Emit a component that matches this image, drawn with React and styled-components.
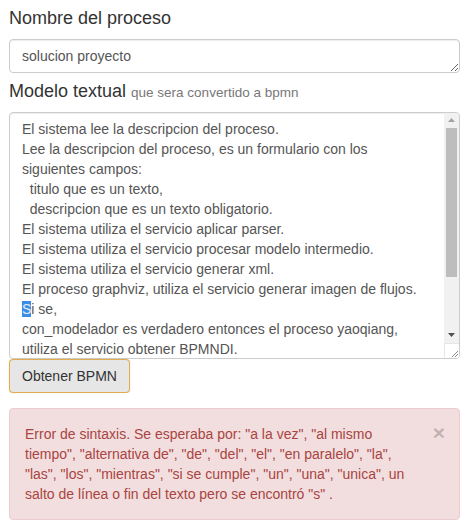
import React from 'react';
import styled, { createGlobalStyle } from 'styled-components';

const GlobalStyle = createGlobalStyle`
  html, body {
    margin: 0;
    padding: 0;
    background: #fff;
  }
  body {
    font-family: "Liberation Sans", Arial, sans-serif;
    font-size: 14px;
    line-height: 1.42857143;
    color: #333;
  }
  * {
    box-sizing: border-box;
  }
`;

const Page = styled.div`
  width: 451px;
  margin-left: 9px;
`;

const Heading = styled.h4`
  font-size: 18px;
  font-weight: 500;
  line-height: 1.1;
  margin: 9px 0 10px;
  color: #333;
`;

const Hint = styled.small`
  font-size: 75%;
  font-weight: 400;
  color: #777;
`;

const NameInput = styled.textarea`
  display: block;
  width: 100%;
  height: 34px;
  padding: 6px 12px;
  margin: 0;
  font-family: inherit;
  font-size: 14px;
  line-height: 1.42857143;
  color: #555;
  background: #fff;
  border: 1px solid #ccc;
  border-radius: 4px;
  box-shadow: inset 0 1px 1px rgba(0, 0, 0, 0.075);
  resize: vertical;
  overflow: hidden;
  outline: none;
`;

const ModelBox = styled.div`
  display: flex;
  width: 100%;
  height: 247px;
  background: #fff;
  border: 1px solid #ccc;
  border-radius: 4px;
  box-shadow: inset 0 1px 1px rgba(0, 0, 0, 0.075);
  overflow: hidden;
`;

const Lines = styled.div`
  flex: 1;
  min-width: 0;
  padding: 6px 12px;
  color: #555;
  white-space: pre-wrap;
  overflow: hidden;
`;

const Selected = styled.span`
  background: #3a8ee8;
  color: #e6ecf5;
`;

const Rail = styled.div`
  display: flex;
  flex-direction: column;
  width: 15px;
  flex-shrink: 0;
  background: #f1f1f1;
`;

const ArrowButton = styled.div`
  display: flex;
  align-items: center;
  justify-content: center;
  height: 15px;
  flex-shrink: 0;
`;

const Track = styled.div`
  flex: 1;
  padding: 0 2px;
`;

const Thumb = styled.div`
  height: 149px;
  background: #bdbdbd;
`;

const Corner = styled.div`
  display: flex;
  align-items: flex-end;
  justify-content: flex-end;
  height: 15px;
  flex-shrink: 0;
  background: #fff;
  border-left: 1px solid #e6e6e6;
  border-top: 1px solid #e6e6e6;
`;

const Button = styled.button`
  display: inline-block;
  margin: 0;
  padding: 6px 12px;
  font-family: inherit;
  font-size: 14px;
  line-height: 1.42857143;
  color: #333;
  background: #e6e6e6;
  border: 1px solid #e0ac52;
  border-radius: 4px;
  box-shadow: 0 0 1px 0 rgba(229, 151, 0, 0.6);
  cursor: pointer;
`;

const Alert = styled.div`
  position: relative;
  margin-top: 15px;
  padding: 15px 35px 15px 15px;
  color: #a94442;
  background: #f2dede;
  border: 1px solid #ebccd1;
  border-radius: 4px;
`;

const Close = styled.span`
  position: absolute;
  top: 13px;
  right: 14px;
  font-size: 21px;
  font-weight: 700;
  line-height: 1;
  color: #000;
  opacity: 0.2;
  text-shadow: 0 1px 0 #fff;
  cursor: pointer;
`;

const before = `El sistema lee la descripcion del proceso.
Lee la descripcion del proceso, es un formulario con los
siguientes campos:
  titulo que es un texto,
  descripcion que es un texto obligatorio.
El sistema utiliza el servicio aplicar parser.
El sistema utiliza el servicio procesar modelo intermedio.
El sistema utiliza el servicio generar xml.
El proceso graphviz, utiliza el servicio generar imagen de flujos.
`;

const after = `i se,
con_modelador es verdadero entonces el proceso yaoqiang,
utiliza el servicio obtener BPMNDI.
Si no,
el proceso yaoqiang, utiliza el servicio generar BPMN.
El sistema utiliza el servicio guardar BPMN.
El sistema muestra el BPMN.`;

export default function App() {
  return (
    <Page>
      <GlobalStyle />
      <Heading>Nombre del proceso</Heading>
      <NameInput rows={1} readOnly defaultValue="solucion proyecto" />
      <Heading>
        Modelo textual <Hint>que sera convertido a bpmn</Hint>
      </Heading>
      <ModelBox>
        <Lines>
          {before}
          <Selected>S</Selected>
          {after}
        </Lines>
        <Rail>
          <ArrowButton>
            <svg width="7" height="4" viewBox="0 0 7 4">
              <path d="M0 4 L3.5 0 L7 4 Z" fill="#a3a3a3" />
            </svg>
          </ArrowButton>
          <Track>
            <Thumb />
          </Track>
          <ArrowButton>
            <svg width="7" height="4" viewBox="0 0 7 4">
              <path d="M0 0 L7 0 L3.5 4 Z" fill="#505050" />
            </svg>
          </ArrowButton>
          <Corner>
            <svg width="8" height="8" viewBox="0 0 8 8">
              <path d="M1 7 L7 1 M4 7 L7 4" stroke="#8a8a8a" strokeWidth="1" />
            </svg>
          </Corner>
        </Rail>
      </ModelBox>
      <Button>Obtener BPMN</Button>
      <Alert>
        <Close>×</Close>
        Error de sintaxis. Se esperaba por: "a la vez", "al mismo tiempo", "alternativa de", "de", "del", "el", "en paralelo", "la", "las", "los", "mientras", "si se cumple", "un", "una", "unica", un salto de línea o fin del texto pero se encontró "s" .
      </Alert>
    </Page>
  );
}
